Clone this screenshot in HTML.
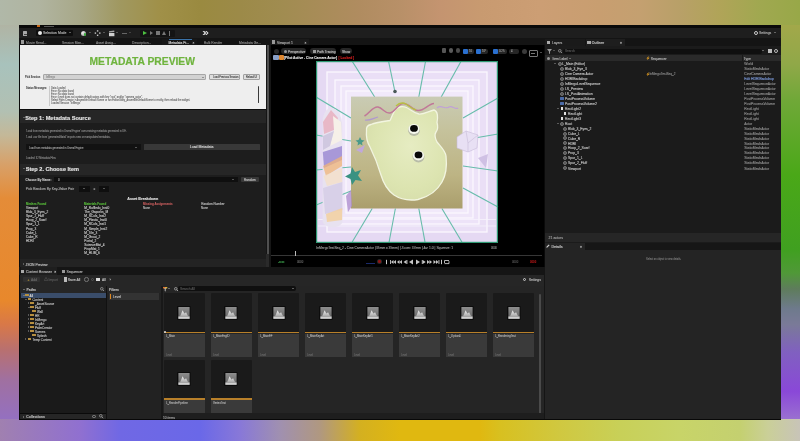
<!DOCTYPE html>
<html><head><meta charset="utf-8">
<style>
*{margin:0;padding:0;box-sizing:border-box}
html,body{width:800px;height:441px;overflow:hidden;background:#0a0a0a}
body{position:relative;font-family:"Liberation Sans",sans-serif;color:#c0c0c0}
.a{position:absolute}
.t{position:absolute;white-space:nowrap;line-height:1}
</style></head><body>
<div style="position:absolute;left:0;top:0;width:800px;height:441px;will-change:transform">
<div class="a" style="left:0;top:0;width:800px;height:26px;background:linear-gradient(90deg,#b0b8a8 0%,#b0b4a0 5%,#a8a888 10%,#a09860 15%,#a09048 20%,#9a8a40 25%,#9c8a48 30%,#a08c50 35%,#a88c58 40%,#b08c60 45%,#b89068 50%,#c49470 55%,#c89a70 60%,#cc9e74 67.5%,#c89e70 75%,#c4a070 80%,#b8a068 85%,#b0a458 90%,#a0a850 95%,#98a848 100%)"></div>
<div class="a" style="left:0;top:418px;width:800px;height:23px;background:linear-gradient(90deg,#a080b0 0%,#9070d0 10%,#7068e4 15%,#6a68e8 25%,#8878d8 30%,#a090b0 35%,#b09880 40%,#d4b020 45%,#e0b810 50%,#e0b810 60%,#d8c020 62.5%,#d0c840 70%,#c8d058 77.5%,#c8d468 85%,#c4d070 92.5%,#cacf98 96%,#c8c4b8 100%)"></div>
<div class="a" style="left:0;top:25px;width:20px;height:394px;background:linear-gradient(180deg,#b0b4a4 0%,#a8c2bc 10%,#b2c0b2 22%,#c4b898 28%,#d8a068 35.5%,#e48c38 44%,#e8882c 70%,#d87848 76%,#b87070 82.5%,#a070a0 90%,#9470c0 100%)"></div>
<div class="a" style="left:780px;top:25px;width:20px;height:394px;background:linear-gradient(180deg,#a2a84a 0%,#90a848 10%,#70a838 19%,#4aa818 38%,#40a020 57%,#509838 63%,#5e7c5c 67%,#6e7a8c 72%,#7a7a98 76%,#8060c0 83%,#8a48d8 93%,#9a70d0 100%)"></div>
<div class="a" style="left:19px;top:25px;width:762px;height:394px;background:#0a0a0a;"></div>
<div class="a" style="left:19px;top:28px;width:762px;height:10px;background:#1e1e1e;"></div>
<div class="a" style="left:19px;top:38px;width:762px;height:6.5px;background:#141414;"></div>
<div class="a" style="left:19px;top:44.5px;width:762px;height:0.5px;background:#0a0a0a;"></div>
<div class="a" style="left:23px;top:30.8px;width:4.2px;height:5.4px;background:#a8a8a8;border-radius:0.5px"></div>
<div class="a" style="left:23.6px;top:33.6px;width:3px;height:0.6px;background:#444;"></div>
<div class="a" style="left:35.5px;top:30px;width:37px;height:6px;background:#0e0e0e;border-radius:1px"></div>
<div class="a" style="left:38px;top:31px;width:4px;height:4px;border-radius:50%;background:#e8e8e8"></div>
<div class="t" style="left:43.00px;top:32.34px;font-size:3.4px;color:#b8b8b8;-webkit-text-stroke-width:0.119px;">Selection Mode</div>
<div class="a" style="left:68.50px;top:32.33px;width:0;height:0;border-left:1.12px solid transparent;border-right:1.12px solid transparent;border-top:1.35px solid #aaa"></div>
<div class="a" style="left:81px;top:30.5px;width:5px;height:5px;border-radius:50%;background:radial-gradient(circle at 35% 35%,#eee,#888)"></div>
<div class="a" style="left:84px;top:33.3px;width:2.4px;height:2.4px;border-radius:50%;background:#3aa83a"></div>
<div class="a" style="left:88.50px;top:32.33px;width:0;height:0;border-left:1.12px solid transparent;border-right:1.12px solid transparent;border-top:1.35px solid #888"></div>
<svg class="a" style="left:94px;top:29px" width="8" height="8" viewBox="94 29 8 8"><g fill="#c8c8c8"><rect x="96.9" y="30.2" width="1.4" height="1.4"/><rect x="94.7" y="32.4" width="1.4" height="1.4"/><rect x="99.1" y="32.4" width="1.4" height="1.4"/><rect x="96.9" y="34.6" width="1.4" height="1.4"/></g></svg>
<div class="a" style="left:102.50px;top:32.33px;width:0;height:0;border-left:1.12px solid transparent;border-right:1.12px solid transparent;border-top:1.35px solid #888"></div>
<svg class="a" style="left:108px;top:30px" width="8" height="7" viewBox="108 30 8 7"><rect x="109" y="33" width="5.4" height="3.2" fill="#d0d0d0"/><path d="M109 32.6 L109 31.2 L114.2 30.6 L114.4 32 Z" fill="#a8a8a8"/></svg>
<div class="a" style="left:116.00px;top:32.33px;width:0;height:0;border-left:1.12px solid transparent;border-right:1.12px solid transparent;border-top:1.35px solid #888"></div>
<div class="a" style="left:122px;top:32.5px;width:5px;height:1px;background:#666;"></div>
<div class="a" style="left:128.50px;top:32.33px;width:0;height:0;border-left:1.12px solid transparent;border-right:1.12px solid transparent;border-top:1.35px solid #666"></div>
<div class="a" style="left:140px;top:29.5px;width:35px;height:7px;background:#141414;border-radius:1px"></div>
<div class="a" style="left:143px;top:30.5px;width:0;height:0;border-left:4px solid #4cc040;border-top:2.5px solid transparent;border-bottom:2.5px solid transparent"></div>
<div class="a" style="left:149.5px;top:30.5px;width:0;height:0;border-left:3.5px solid #777;border-top:2.5px solid transparent;border-bottom:2.5px solid transparent"></div>
<div class="a" style="left:156px;top:31px;width:4px;height:4px;background:#777;"></div>
<div class="a" style="left:162px;top:30.5px;width:0;height:0;border-bottom:4.5px solid #777;border-left:2.5px solid transparent;border-right:2.5px solid transparent"></div>
<div class="a" style="left:169px;top:30.5px;width:1px;height:5px;background:#777;"></div>
<svg class="a" style="left:202px;top:30px" width="8" height="6" viewBox="202 30 8 6"><path d="M202.5 31 L204.3 31 L206.3 33 L204.3 35 L202.5 35 L204.5 33 Z M205.2 31 L206.6 31 L208.6 33 L206.6 35 L205.2 35 L207.2 33 Z" fill="#e0e0e0"/></svg>
<div class="a" style="left:37px;top:25px;width:3px;height:2px;background:#c86818;"></div>
<div class="a" style="left:44px;top:25.5px;width:10px;height:1px;background:#555;"></div>
<div class="a" style="left:754px;top:31px;width:4px;height:4px;border-radius:50%;border:1.2px solid #ccc"></div>
<div class="t" style="left:759.00px;top:32.34px;font-size:3.4px;color:#b0b0b0;-webkit-text-stroke-width:0.119px;">Settings</div>
<div class="a" style="left:773.50px;top:32.34px;width:0;height:0;border-left:1.10px solid transparent;border-right:1.10px solid transparent;border-top:1.32px solid #aaa"></div>
<div class="a" style="left:20.5px;top:40px;width:3.5px;height:4px;background:#999;"></div>
<div class="t" style="left:26.00px;top:41.64px;font-size:3.3px;color:#8a8a8a;-webkit-text-stroke-width:0.116px;">Movie Rend...</div>
<div class="t" style="left:62.00px;top:41.64px;font-size:3.3px;color:#8a8a8a;-webkit-text-stroke-width:0.116px;">Session Man...</div>
<div class="t" style="left:96.00px;top:41.64px;font-size:3.3px;color:#8a8a8a;-webkit-text-stroke-width:0.116px;">Asset Assig...</div>
<div class="t" style="left:132.00px;top:41.64px;font-size:3.3px;color:#8a8a8a;-webkit-text-stroke-width:0.116px;">Description...</div>
<div class="t" style="left:204.00px;top:41.64px;font-size:3.3px;color:#8a8a8a;-webkit-text-stroke-width:0.116px;">Bulk Render</div>
<div class="t" style="left:239.00px;top:41.64px;font-size:3.3px;color:#8a8a8a;-webkit-text-stroke-width:0.116px;">Metadata Ge...</div>
<div class="a" style="left:162px;top:38.5px;width:34.5px;height:6.5px;background:#171717;"></div>
<div class="a" style="left:168.5px;top:38.5px;width:23px;height:0.8px;background:#3a72a8;"></div>
<div class="t" style="left:168.50px;top:41.54px;font-size:3.3px;color:#d8d8d8;-webkit-text-stroke-width:0.116px;">Metadata Pr...</div>
<div class="t" style="left:192.50px;top:41.64px;font-size:3.3px;color:#bbb;-webkit-text-stroke-width:0.116px;">×</div>
<div class="a" style="left:20px;top:45px;width:246px;height:64px;background:#eeeeee;"></div>
<div class="t" style="left:89.50px;top:56.73px;font-size:10.3px;color:#6fb43e;-webkit-text-stroke-width:0.206px;font-weight:bold;">METADATA PREVIEW</div>
<div class="t" style="left:25.30px;top:76.35px;font-size:2.95px;color:#3a3a3a;-webkit-text-stroke-width:0.059px;font-weight:bold;transform:scaleX(0.847);transform-origin:0 0;">Pick Session</div>
<div class="a" style="left:43.2px;top:74.3px;width:163px;height:5.6px;background:#d2d2d2;border:0.6px solid #a6a6a6;border-radius:1px"></div>
<div class="t" style="left:46.00px;top:76.44px;font-size:2.95px;color:#8a8a8a;-webkit-text-stroke-width:0.103px;transform:scaleX(0.847);transform-origin:0 0;">InMergo</div>
<div class="a" style="left:202.00px;top:76.52px;width:0;height:0;border-left:0.97px solid transparent;border-right:0.97px solid transparent;border-top:1.17px solid #555"></div>
<div class="a" style="left:208.8px;top:74.3px;width:31.7px;height:5.6px;background:#dedede;border:0.6px solid #a0a0a0;border-radius:1px"></div>
<div class="t" style="left:212.50px;top:76.44px;font-size:2.95px;color:#404040;-webkit-text-stroke-width:0.103px;transform:scaleX(0.847);transform-origin:0 0;">Load Previous Session</div>
<div class="a" style="left:243px;top:74.3px;width:16.5px;height:5.6px;background:#dedede;border:0.6px solid #a0a0a0;border-radius:1px"></div>
<div class="t" style="left:246.00px;top:76.44px;font-size:2.95px;color:#404040;-webkit-text-stroke-width:0.103px;transform:scaleX(0.847);transform-origin:0 0;">Reload UI</div>
<div class="t" style="left:25.50px;top:86.75px;font-size:2.95px;color:#3a3a3a;-webkit-text-stroke-width:0.059px;font-weight:bold;transform:scaleX(0.847);transform-origin:0 0;">Status Messages:</div>
<div class="a" style="left:49.2px;top:85.7px;width:0.7px;height:20.3px;background:#cacaca;"></div>
<div class="t" style="left:51.30px;top:86.64px;font-size:2.95px;color:#6a6a6a;-webkit-text-stroke-width:0.103px;transform:scaleX(0.864);transform-origin:0 0;">Data Loaded</div>
<div class="t" style="left:51.30px;top:89.71px;font-size:2.95px;color:#6a6a6a;-webkit-text-stroke-width:0.103px;transform:scaleX(0.864);transform-origin:0 0;">Error: No data found</div>
<div class="t" style="left:51.30px;top:92.78px;font-size:2.95px;color:#6a6a6a;-webkit-text-stroke-width:0.103px;transform:scaleX(0.864);transform-origin:0 0;">Error: No data found</div>
<div class="t" style="left:51.30px;top:95.85px;font-size:2.95px;color:#6a6a6a;-webkit-text-stroke-width:0.103px;transform:scaleX(0.864);transform-origin:0 0;">Error: Level does not contain default actors with key &quot;root&quot; and/or &quot;camera_actor&quot;.</div>
<div class="t" style="left:51.30px;top:98.92px;font-size:2.95px;color:#6a6a6a;-webkit-text-stroke-width:0.103px;transform:scaleX(0.864);transform-origin:0 0;">Select Palm Creator &gt; Assemble Default Scene or run EditorUtility_AssembleDefaultScene to rectify, then reload the widget.</div>
<div class="t" style="left:51.30px;top:101.99px;font-size:2.95px;color:#6a6a6a;-webkit-text-stroke-width:0.103px;transform:scaleX(0.864);transform-origin:0 0;">Loaded Session &quot;InMergo&quot;</div>
<div class="a" style="left:257.5px;top:86px;width:1.2px;height:17px;background:#3a3a3a;border-radius:1px"></div>
<div class="a" style="left:20px;top:109px;width:246px;height:1px;background:#0c0c0c;"></div>
<div class="a" style="left:20px;top:110px;width:246px;height:13px;background:#262626;"></div>
<div class="a" style="left:22.50px;top:116.83px;width:0;height:0;border-left:1.12px solid transparent;border-right:1.12px solid transparent;border-top:1.35px solid #999"></div>
<div class="t" style="left:25.30px;top:116.21px;font-size:5.65px;color:#e8e8e8;-webkit-text-stroke-width:0.113px;font-weight:bold;">Step 1: Metadata Source</div>
<div class="a" style="left:20px;top:123px;width:246px;height:41px;background:#1d1d1d;"></div>
<div class="t" style="left:26.20px;top:129.74px;font-size:2.95px;color:#8a8a8a;-webkit-text-stroke-width:0.103px;transform:scaleX(0.854);transform-origin:0 0;">&#x27;Load from metadata generated in Unreal Engine&#x27; uses existing metadata generated in UE.</div>
<div class="t" style="left:26.20px;top:136.04px;font-size:2.95px;color:#8a8a8a;-webkit-text-stroke-width:0.103px;transform:scaleX(0.864);transform-origin:0 0;">&#x27;Load .csv file from &#x27;generated/data/&#x27; imports new or manipulated metadata.</div>
<div class="a" style="left:25.7px;top:144.2px;width:115px;height:6px;background:#121212;border-radius:0.5px"></div>
<div class="t" style="left:28.50px;top:146.54px;font-size:2.95px;color:#a0a0a0;-webkit-text-stroke-width:0.103px;transform:scaleX(0.864);transform-origin:0 0;">Load from metadata generated in Unreal Engine</div>
<div class="a" style="left:135.00px;top:146.52px;width:0;height:0;border-left:1.12px solid transparent;border-right:1.12px solid transparent;border-top:1.35px solid #999"></div>
<div class="a" style="left:143.9px;top:144.2px;width:115.7px;height:5.7px;background:#383838;border-radius:0.5px"></div>
<div class="t" style="left:189.70px;top:146.43px;font-size:3.55px;color:#d8d8d8;-webkit-text-stroke-width:0.124px;">Load Metadata</div>
<div class="t" style="left:25.70px;top:157.04px;font-size:2.95px;color:#8a8a8a;-webkit-text-stroke-width:0.103px;transform:scaleX(0.858);transform-origin:0 0;">Loaded: 32 Metadata Files</div>
<div class="a" style="left:20px;top:164px;width:246px;height:11px;background:#262626;"></div>
<div class="a" style="left:22.50px;top:168.32px;width:0;height:0;border-left:1.12px solid transparent;border-right:1.12px solid transparent;border-top:1.35px solid #999"></div>
<div class="t" style="left:25.70px;top:167.31px;font-size:5.58px;color:#e8e8e8;-webkit-text-stroke-width:0.112px;font-weight:bold;">Step 2. Choose Item</div>
<div class="a" style="left:20px;top:175px;width:246px;height:84px;background:#1d1d1d;"></div>
<div class="t" style="left:25.50px;top:178.54px;font-size:3.05px;color:#d8d8d8;-webkit-text-stroke-width:0.061px;font-weight:bold;">Choose By Name:</div>
<div class="a" style="left:54.2px;top:176.5px;width:183.8px;height:5.5px;background:#0f0f0f;border-radius:0.5px"></div>
<div class="t" style="left:58.00px;top:178.54px;font-size:2.95px;color:#aaa;-webkit-text-stroke-width:0.103px;transform:scaleX(0.949);transform-origin:0 0;">0</div>
<div class="a" style="left:232.00px;top:178.52px;width:0;height:0;border-left:1.12px solid transparent;border-right:1.12px solid transparent;border-top:1.35px solid #999"></div>
<div class="a" style="left:240.8px;top:176.5px;width:18.5px;height:5.5px;background:#383838;border-radius:1px"></div>
<div class="t" style="left:244.00px;top:178.53px;font-size:3.1px;color:#c8c8c8;-webkit-text-stroke-width:0.109px;">Random</div>
<div class="t" style="left:25.70px;top:188.34px;font-size:3.4px;color:#a8a8a8;-webkit-text-stroke-width:0.119px;">Pick Random By Key-Value Pair</div>
<div class="a" style="left:79px;top:186px;width:10.5px;height:6px;background:#0f0f0f;border-radius:0.5px"></div>
<div class="a" style="left:83.00px;top:188.32px;width:0;height:0;border-left:1.12px solid transparent;border-right:1.12px solid transparent;border-top:1.35px solid #999"></div>
<div class="t" style="left:93.50px;top:188.34px;font-size:3px;color:#999;-webkit-text-stroke-width:0.105px;">=</div>
<div class="a" style="left:99.2px;top:186px;width:10px;height:6px;background:#0f0f0f;border-radius:0.5px"></div>
<div class="a" style="left:103.00px;top:188.32px;width:0;height:0;border-left:1.12px solid transparent;border-right:1.12px solid transparent;border-top:1.35px solid #999"></div>
<div class="t" style="left:127.25px;top:197.56px;font-size:3.69px;color:#e8e8e8;-webkit-text-stroke-width:0.074px;font-weight:bold;">Asset Breakdown</div>
<div class="t" style="left:25.90px;top:202.95px;font-size:2.95px;color:#5cc83c;-webkit-text-stroke-width:0.059px;font-weight:bold;transform:scaleX(0.983);transform-origin:0 0;">Meshes Found</div>
<div class="t" style="left:84.30px;top:202.95px;font-size:2.95px;color:#5cc83c;-webkit-text-stroke-width:0.059px;font-weight:bold;transform:scaleX(0.983);transform-origin:0 0;">Materials Found</div>
<div class="t" style="left:142.70px;top:202.95px;font-size:2.95px;color:#d06060;-webkit-text-stroke-width:0.059px;font-weight:bold;transform:scaleX(0.983);transform-origin:0 0;">Missing Assignments</div>
<div class="t" style="left:201.25px;top:202.93px;font-size:3.05px;color:#c0c0c0;-webkit-text-stroke-width:0.107px;">Random Number</div>
<div class="t" style="left:142.70px;top:207.04px;font-size:2.95px;color:#c0c0c0;-webkit-text-stroke-width:0.103px;transform:scaleX(0.983);transform-origin:0 0;">None</div>
<div class="t" style="left:201.25px;top:207.04px;font-size:2.95px;color:#c0c0c0;-webkit-text-stroke-width:0.103px;transform:scaleX(0.983);transform-origin:0 0;">None</div>
<div class="t" style="left:25.90px;top:207.08px;font-size:3.2px;color:#c8c8c8;-webkit-text-stroke-width:0.112px;">Viewport</div>
<div class="t" style="left:25.90px;top:211.18px;font-size:3.2px;color:#c8c8c8;-webkit-text-stroke-width:0.112px;">Blob_3_Eyes_2</div>
<div class="t" style="left:25.90px;top:215.28px;font-size:3.2px;color:#c8c8c8;-webkit-text-stroke-width:0.112px;">Spur_2_Fluff</div>
<div class="t" style="left:25.90px;top:219.38px;font-size:3.2px;color:#c8c8c8;-webkit-text-stroke-width:0.112px;">Hoop_2_Scarf</div>
<div class="t" style="left:25.90px;top:223.48px;font-size:3.2px;color:#c8c8c8;-webkit-text-stroke-width:0.112px;">Spur_1_L</div>
<div class="t" style="left:25.90px;top:227.58px;font-size:3.2px;color:#c8c8c8;-webkit-text-stroke-width:0.112px;">Prop_3</div>
<div class="t" style="left:25.90px;top:231.68px;font-size:3.2px;color:#c8c8c8;-webkit-text-stroke-width:0.112px;">Cube_L</div>
<div class="t" style="left:25.90px;top:235.78px;font-size:3.2px;color:#c8c8c8;-webkit-text-stroke-width:0.112px;">Cube_R</div>
<div class="t" style="left:25.90px;top:239.88px;font-size:3.2px;color:#c8c8c8;-webkit-text-stroke-width:0.112px;">HDRI</div>
<div class="t" style="left:84.30px;top:207.08px;font-size:3.2px;color:#c8c8c8;-webkit-text-stroke-width:0.112px;">M_Ruffledo_Inst0</div>
<div class="t" style="left:84.30px;top:211.18px;font-size:3.2px;color:#c8c8c8;-webkit-text-stroke-width:0.112px;">The_Gaporks_M</div>
<div class="t" style="left:84.30px;top:215.28px;font-size:3.2px;color:#c8c8c8;-webkit-text-stroke-width:0.112px;">M_SCols_Inst2</div>
<div class="t" style="left:84.30px;top:219.38px;font-size:3.2px;color:#c8c8c8;-webkit-text-stroke-width:0.112px;">M_Plastic_Inst0</div>
<div class="t" style="left:84.30px;top:223.48px;font-size:3.2px;color:#c8c8c8;-webkit-text-stroke-width:0.112px;">M_RCols_Inst1</div>
<div class="t" style="left:84.30px;top:227.58px;font-size:3.2px;color:#c8c8c8;-webkit-text-stroke-width:0.112px;">M_Simple_Inst2</div>
<div class="t" style="left:84.30px;top:231.68px;font-size:3.2px;color:#c8c8c8;-webkit-text-stroke-width:0.112px;">M_Tile_3</div>
<div class="t" style="left:84.30px;top:235.78px;font-size:3.2px;color:#c8c8c8;-webkit-text-stroke-width:0.112px;">M_Grout_2</div>
<div class="t" style="left:84.30px;top:239.88px;font-size:3.2px;color:#c8c8c8;-webkit-text-stroke-width:0.112px;">Portal_2</div>
<div class="t" style="left:84.30px;top:243.98px;font-size:3.2px;color:#c8c8c8;-webkit-text-stroke-width:0.112px;">ScienceMat_4</div>
<div class="t" style="left:84.30px;top:248.08px;font-size:3.2px;color:#c8c8c8;-webkit-text-stroke-width:0.112px;">PropMat_1</div>
<div class="t" style="left:84.30px;top:252.18px;font-size:3.2px;color:#c8c8c8;-webkit-text-stroke-width:0.112px;">M_HLIM_6</div>
<div class="a" style="left:20px;top:259px;width:246px;height:7.5px;background:#232323;"></div>
<div class="a" style="left:22.50px;top:263.22px;width:0;height:0;border-top:0.97px solid transparent;border-bottom:0.97px solid transparent;border-left:1.17px solid #999"></div>
<div class="t" style="left:25.50px;top:263.54px;font-size:3.38px;color:#c0c0c0;-webkit-text-stroke-width:0.118px;">JSON Preview</div>
<div class="a" style="left:266px;top:45px;width:1px;height:209px;background:#151515;"></div>
<div class="a" style="left:267px;top:45px;width:2.2px;height:209px;background:#505050;"></div>
<div class="a" style="left:266px;top:254px;width:3px;height:13px;background:#2a2a2a;"></div>
<div class="a" style="left:269px;top:45px;width:2px;height:222px;background:#161616;"></div>
<div class="a" style="left:271px;top:45px;width:273px;height:222px;background:#000;"></div>
<div class="a" style="left:270px;top:39px;width:39px;height:6px;background:#1a1a1a;"></div>
<div class="a" style="left:271.5px;top:40.3px;width:3.5px;height:3.5px;background:#999;"></div>
<div class="t" style="left:277.00px;top:41.64px;font-size:3.4px;color:#b0b0b0;-webkit-text-stroke-width:0.119px;">Viewport 1</div>
<div class="t" style="left:304.50px;top:41.64px;font-size:3.3px;color:#bbb;-webkit-text-stroke-width:0.116px;">×</div>
<div class="a" style="left:274px;top:49px;width:5px;height:5px;border-radius:50%;background:#2a2a2a"></div>
<div class="a" style="left:281px;top:48.2px;width:25px;height:6px;background:#262626;border-radius:3px"></div>
<div class="t" style="left:288.00px;top:50.54px;font-size:3.3px;color:#c0c0c0;-webkit-text-stroke-width:0.116px;">Perspective</div>
<div class="a" style="left:310px;top:48.2px;width:26px;height:6px;background:#262626;border-radius:3px"></div>
<div class="t" style="left:317.00px;top:50.54px;font-size:3.3px;color:#c0c0c0;-webkit-text-stroke-width:0.116px;">Path Tracing</div>
<div class="a" style="left:340px;top:48.2px;width:11.5px;height:6px;background:#262626;border-radius:3px"></div>
<div class="t" style="left:342.00px;top:50.54px;font-size:3.3px;color:#c0c0c0;-webkit-text-stroke-width:0.116px;">Show</div>
<div class="a" style="left:283.5px;top:49.6px;width:3px;height:3px;background:#999;border-radius:50%"></div>
<div class="a" style="left:312.5px;top:49.6px;width:3px;height:3px;background:#999;"></div>
<div class="a" style="left:273px;top:55px;width:6px;height:5px;background:#8aa0c8;border-radius:1px"></div>
<div class="a" style="left:279px;top:55px;width:4.5px;height:5px;background:#e08830;border-radius:1px"></div>
<div class="t" style="left:284.00px;top:56.54px;font-size:3.33px;color:#f0f0f0;-webkit-text-stroke-width:0.067px;font-weight:bold;">[Pilot Active - Cine Camera Actor]</div>
<div class="t" style="left:338.50px;top:56.54px;font-size:3.33px;color:#e02020;-webkit-text-stroke-width:0.067px;font-weight:bold;">[ Locked ]</div>
<div class="a" style="left:462.5px;top:48.5px;width:5px;height:5px;background:#2a70d0;border-radius:1px"></div>
<div class="a" style="left:476px;top:48.5px;width:5px;height:5px;background:#2a70d0;border-radius:1px"></div>
<div class="a" style="left:493px;top:48.5px;width:5px;height:5px;background:#2a70d0;border-radius:1px"></div>
<div class="a" style="left:467.5px;top:48.5px;width:6px;height:5px;background:#262626;border-radius:0 2px 2px 0"></div>
<div class="a" style="left:481px;top:48.5px;width:7px;height:5px;background:#262626;border-radius:0 2px 2px 0"></div>
<div class="a" style="left:498px;top:48.5px;width:9px;height:5px;background:#262626;border-radius:0 2px 2px 0"></div>
<div class="a" style="left:508.5px;top:48.5px;width:10px;height:5px;background:#262626;border-radius:2px"></div>
<div class="a" style="left:522px;top:48.5px;width:5px;height:5px;background:#3a3a3a;border-radius:50%"></div>
<div class="a" style="left:528.6px;top:50px;width:9.2px;height:6.8px;background:#000;border:0.9px solid #777;border-radius:1px"></div>
<div class="a" style="left:531px;top:53px;width:4px;height:0.8px;background:#777;"></div>
<div class="a" style="left:539.50px;top:52.33px;width:0;height:0;border-left:1.12px solid transparent;border-right:1.12px solid transparent;border-top:1.35px solid #999"></div>
<div class="t" style="left:468.50px;top:50.34px;font-size:2.95px;color:#999;-webkit-text-stroke-width:0.103px;transform:scaleX(0.949);transform-origin:0 0;">10</div>
<div class="t" style="left:482.00px;top:50.34px;font-size:2.95px;color:#999;-webkit-text-stroke-width:0.103px;transform:scaleX(0.949);transform-origin:0 0;">10°</div>
<div class="t" style="left:499.00px;top:50.34px;font-size:2.95px;color:#999;-webkit-text-stroke-width:0.103px;transform:scaleX(0.949);transform-origin:0 0;">0.25</div>
<div class="t" style="left:511.00px;top:50.34px;font-size:2.95px;color:#999;-webkit-text-stroke-width:0.103px;transform:scaleX(0.949);transform-origin:0 0;">4</div>
<div class="a" style="left:441.5px;top:48.3px;width:4.5px;height:4.5px;background:#555;border-radius:1px"></div>
<div class="a" style="left:448.5px;top:48.3px;width:4.5px;height:4.5px;background:#5a5a5a;border-radius:50%"></div>
<div class="a" style="left:455.5px;top:48.3px;width:4.5px;height:4.5px;background:#4a4a4a;border-radius:50%"></div>
<svg class="a" style="left:316px;top:61px" width="183" height="183" viewBox="316 61 183 183">
<defs>
<linearGradient id="kh" x1="0" y1="0" x2="0" y2="1"><stop offset="0" stop-color="#c9cbb4"/><stop offset="0.3" stop-color="#c5c29c"/><stop offset="0.7" stop-color="#bdb484"/><stop offset="1" stop-color="#aa9e6c"/></linearGradient>
<radialGradient id="bl" cx="0.55" cy="0.42" r="0.65"><stop offset="0" stop-color="#e6ecc2"/><stop offset="0.7" stop-color="#dce4b0"/><stop offset="0.92" stop-color="#d8dfac"/><stop offset="1" stop-color="#eef2d6"/></radialGradient>
<radialGradient id="eye" cx="0.5" cy="0.6" r="0.5"><stop offset="0" stop-color="#c8ccc0"/><stop offset="0.7" stop-color="#e8ecd8"/><stop offset="1" stop-color="#f4f6ea"/></radialGradient>
</defs>
<rect x="316" y="61" width="182" height="182" fill="#e5d9f3"/>
<rect x="327" y="72" width="160" height="160" fill="#eadff6"/>
<rect x="335" y="80" width="144" height="144" fill="#ede3f8"/>
<rect x="341" y="86" width="132" height="132" fill="#efe6f9"/>
<rect x="346" y="91" width="122" height="122" fill="#f1e9fa"/>
<g fill="none" stroke="#faf7fe" stroke-width="1.3">
<rect x="327" y="72" width="160" height="160"/>
<rect x="335" y="80" width="144" height="144"/>
<rect x="341" y="86" width="132" height="132"/>
<rect x="346" y="91" width="122" height="122"/>
</g>
<g stroke="#f6f2fd" stroke-width="0.8" fill="none">
<line x1="318" y1="219.5" x2="496" y2="219.5"/>
<line x1="318" y1="226" x2="496" y2="226"/>
</g>
<g stroke="#66bcaa" stroke-width="1.1" fill="none">
<line x1="352" y1="61" x2="374.7" y2="97"/>
<line x1="388.5" y1="61" x2="395" y2="92"/>
<line x1="425.6" y1="61" x2="418.8" y2="97"/>
<line x1="461.2" y1="61" x2="441.2" y2="97"/>
<line x1="316" y1="97" x2="351" y2="118"/>
<line x1="498" y1="98" x2="463" y2="118"/>
<line x1="316" y1="135" x2="351" y2="141"/>
<line x1="498" y1="134" x2="463" y2="140"/>
<line x1="316" y1="170" x2="351" y2="167"/>
<line x1="498" y1="171" x2="463" y2="166"/>
<line x1="316" y1="205" x2="351" y2="191"/>
<line x1="498" y1="207" x2="463" y2="188"/>
<line x1="352.2" y1="242" x2="372.2" y2="208.5"/>
<line x1="389.1" y1="242" x2="395.4" y2="208.5"/>
<line x1="425" y1="242" x2="418.8" y2="208.5"/>
<line x1="461.9" y1="242" x2="441.9" y2="208.5"/>
</g>
<rect x="351" y="96.6" width="111.5" height="111.9" fill="url(#kh)"/>
<path d="M366.5 131 C366 127 368 125 371 124.5 C375 122.5 382 121.5 390 120.5 C392 117 393 112 396 109 C398 106.5 403 106 406.5 107.5 C410 109 413 113 419 114 C424 114.5 429 111 434 110 C438 111 438 118 437 122.5 C438 126 438.5 129 436 132 C434.5 134 435 138 437 142 C440 146 445 150 446 156 C447 165 446 175 442 182 C437 191 428 197 418 199.5 C408 201 400 199 394 195 C386 189 383 182 381 175 C378 165 374 155 370 147 C367 142 366 136 366.5 131 Z" fill="url(#bl)" stroke="#f2f5e0" stroke-width="1.3"/>
<ellipse cx="414" cy="130.2" rx="6" ry="5.8" fill="#b8bca8"/><ellipse cx="414" cy="129" rx="5.6" ry="5" fill="#f6f8ee"/><ellipse cx="414" cy="128.4" rx="3.9" ry="3.4" fill="#080808"/>
<ellipse cx="418.5" cy="156.7" rx="6" ry="5.8" fill="#b8bca8"/><ellipse cx="418.5" cy="155.5" rx="5.6" ry="5" fill="#f6f8ee"/><ellipse cx="418.5" cy="154.9" rx="3.9" ry="3.4" fill="#080808"/>
<path d="M364.5 116 C370 113 373 106 378 107 C383 108 385 114 390 113 C395 112 398 104 403 103.5 C409 103 412 110 418 110.5 C424 111 428 104 434 103.5" fill="none" stroke="#c07898" stroke-width="1.5"/>
<path d="M396 106 C399 103 403 102.5 406 104 C409 106 412 109 416 110" fill="none" stroke="#b8c040" stroke-width="1.3"/>
<path d="M365 120 C369 121 374 118 378 117" fill="none" stroke="#b098d0" stroke-width="1.2"/>
<path d="M437 108 C441 104 445 110 449 107 C452 105 455 110 458 108" fill="none" stroke="#c0a0d8" stroke-width="1.2"/>
<path d="M322.6 124 C322 114 327 107 332 108 C338 109 342 116 342.3 126 L342.5 222 C340 229 326 229 322.6 222 Z" fill="#e8e2f0"/>
<path d="M323 122 L331 110 L338 118 L334 130 L324 134 Z" fill="#e8b0c0" opacity="0.85"/>
<path d="M333 116 L341 122 L342 140 L330 146 L334 130 Z" fill="#f6f0e8"/>
<path d="M323 136 L334 131 L330 146 L323 150 Z" fill="#d0c8e0"/>
<path d="M322.8 152 L342 146 L342 160 L324 168 Z" fill="#a898d8"/>
<path d="M323 166 L342 156 L342 166 L326 176 Z" fill="#f0b478" opacity="0.75"/>
<path d="M323.5 176 L342 168 L342.3 182 L327 186 Z" fill="#f4e0c8" opacity="0.8"/>
<path d="M323 188 L342.3 182 L342.3 210 L325 214 Z" fill="#d8d0e8"/>
<path d="M326 214 L342.3 208 L342 220 L327 222 Z" fill="#f2d0a0" opacity="0.85"/>
<path d="M346 196 L351 190 L352 206 L348 212 Z" fill="#b090d0" opacity="0.8"/>
<path d="M352 167 L355 172 L361 170 L358 175.5 L362 181 L355.5 180 L352 185 L350.5 179 L345 176.5 L350.5 173.5 Z" fill="#3a9282"/>
<path d="M360 137 L361.5 140 L364.5 140.5 L362 142.5 L362.5 145.5 L360 144 L357.5 145.5 L358 142.5 L355.5 140.5 L358.5 140 Z" fill="#4a9a8a"/>
<path d="M457 137 L466 131 L478 135 L477 148 L468 152 L457 148 Z" fill="#e8e0f4" stroke="#c8bcd8" stroke-width="0.6"/>
<path d="M466 131 L468 143 L478 135 M468 143 L468 152" fill="none" stroke="#c8bcd8" stroke-width="0.6"/>
<path d="M478 158 L488 154 L486 168 L482 163 Z" fill="#cfc0e4"/>
<path d="M356 150 L365 145 L362 153 Z" fill="#c0a8dc"/>
<circle cx="395" cy="91.5" r="1.8" fill="#4a5858"/>
<rect x="316.6" y="61.6" width="180.8" height="180.8" fill="none" stroke="#2f9a74" stroke-width="1.2"/>
</svg>

<div class="t" style="left:316.25px;top:247.44px;font-size:3.3px;color:#9a9a9a;-webkit-text-stroke-width:0.116px;">InMergoTestSeq_2 - Cine CameraActor (35mm x 35mm) | Zoom: 37mm | Av: 1.0 | Squeeze: 1</div>
<div class="t" style="left:491.40px;top:247.34px;font-size:2.95px;color:#888;-webkit-text-stroke-width:0.103px;transform:scaleX(0.881);transform-origin:0 0;">0000</div>
<div class="a" style="left:271px;top:254.8px;width:271px;height:1.4px;background:#363636;"></div>
<div class="a" style="left:294.5px;top:251px;width:1.6px;height:4.5px;background:#bbb;"></div>
<div class="t" style="left:278.00px;top:260.64px;font-size:2.95px;color:#3a9a4a;-webkit-text-stroke-width:0.103px;transform:scaleX(0.949);transform-origin:0 0;">-xxxx</div>
<div class="t" style="left:297.00px;top:260.64px;font-size:2.95px;color:#666;-webkit-text-stroke-width:0.103px;transform:scaleX(0.949);transform-origin:0 0;">0000</div>
<div class="a" style="left:366px;top:262.8px;width:9px;height:0.7px;background:#1a2a6a;"></div>
<div class="a" style="left:376.8px;top:259px;width:5.2px;height:5.2px;border-radius:50%;background:#2a2a2a"></div>
<div class="a" style="left:378.1px;top:260.3px;width:2.6px;height:2.6px;border-radius:50%;background:#901414"></div>
<svg class="a" style="left:384px;top:258px" width="68" height="8" viewBox="384 258 68 8"><g fill="#c8c8c8"><rect x="386" y="259.8" width="1" height="4.4"/><rect x="390" y="260" width="0.9" height="4"/><path d="M391 262 L393.5 260 L393.5 264 Z M393.5 262 L396 260 L396 264 Z"/><path d="M397 262 L399.5 260 L399.5 264 Z M399.5 262 L402 260 L402 264 Z"/><path d="M403.5 262 L406.5 260 L406.5 264 Z"/><rect x="406.5" y="260" width="0.9" height="4"/><path d="M409 262 L413 259.6 L413 264.4 Z"/><path d="M416 259.6 L420 262 L416 264.4 Z"/><rect x="421.8" y="260" width="0.9" height="4"/><path d="M422.7 260 L425.7 262 L422.7 264 Z"/><path d="M427 260 L429.5 262 L427 264 Z M429.5 260 L432 262 L429.5 264 Z"/><path d="M433.5 260 L436 262 L433.5 264 Z M436 260 L438.5 262 L436 264 Z"/><rect x="438.5" y="260" width="0.9" height="4"/><rect x="441" y="259.8" width="1" height="4.4"/></g><path d="M444.5 263 L444.5 260.5 L449 260.5 M449 261.2 L449 263.6 L444.5 263.6" fill="none" stroke="#c8c8c8" stroke-width="0.9"/></svg>
<div class="t" style="left:512.00px;top:260.94px;font-size:2.95px;color:#555;-webkit-text-stroke-width:0.103px;transform:scaleX(0.949);transform-origin:0 0;">0000</div>
<div class="t" style="left:529.50px;top:260.95px;font-size:2.95px;color:#b01818;-webkit-text-stroke-width:0.059px;font-weight:bold;transform:scaleX(0.949);transform-origin:0 0;">0000</div>
<div class="a" style="left:545px;top:39px;width:236px;height:6.5px;background:#141414;"></div>
<div class="a" style="left:545px;top:39px;width:40px;height:6.5px;background:#1a1a1a;"></div>
<div class="a" style="left:547px;top:40.5px;width:3px;height:3.5px;background:#aaa;"></div>
<div class="t" style="left:552.00px;top:41.54px;font-size:3.43px;color:#b0b0b0;-webkit-text-stroke-width:0.120px;">Layers</div>
<div class="a" style="left:585.6px;top:39px;width:39.2px;height:6.5px;background:#1e1e1e;"></div>
<div class="a" style="left:587px;top:40.5px;width:3.5px;height:3.5px;background:#aaa;"></div>
<div class="t" style="left:591.80px;top:41.54px;font-size:3.5px;color:#c8c8c8;-webkit-text-stroke-width:0.123px;">Outliner</div>
<div class="t" style="left:620.00px;top:41.54px;font-size:3.3px;color:#ccc;-webkit-text-stroke-width:0.116px;">×</div>
<div class="a" style="left:545px;top:45.5px;width:236px;height:9.5px;background:#1b1b1b;"></div>
<svg class="a" style="left:547px;top:48.5px" width="5" height="5" viewBox="0 0 5 5"><path d="M0 0 L5 0 L3 2.5 L3 5 L2 4.5 L2 2.5 Z" fill="#999"/></svg>
<div class="a" style="left:553.00px;top:50.33px;width:0;height:0;border-left:1.12px solid transparent;border-right:1.12px solid transparent;border-top:1.35px solid #888"></div>
<svg class="a" style="left:558.30px;top:48.60px" width="4.5" height="4.5" viewBox="0 0 4.5 4.5"><circle cx="1.8" cy="1.8" r="1.3" fill="none" stroke="#aaa" stroke-width="0.7"/><path d="M2.8 2.8 L4.2 4.2" stroke="#aaa" stroke-width="0.8"/></svg>
<div class="a" style="left:563px;top:48.5px;width:199px;height:5px;background:#0f0f0f;border-radius:2px"></div>
<div class="t" style="left:565.00px;top:50.33px;font-size:3.16px;color:#555;-webkit-text-stroke-width:0.111px;">Search</div>
<div class="a" style="left:761.50px;top:50.33px;width:0;height:0;border-left:1.12px solid transparent;border-right:1.12px solid transparent;border-top:1.35px solid #aaa"></div>
<div class="a" style="left:767.5px;top:49.2px;width:4px;height:3.5px;background:#bbb;"></div>
<div class="a" style="left:773.5px;top:49px;width:4px;height:4px;border-radius:50%;border:0.9px solid #bbb"></div>
<div class="a" style="left:545px;top:55px;width:236px;height:6.3px;background:#2a2a2a;"></div>
<div class="a" style="left:547.3px;top:56.8px;width:3px;height:3px;border-radius:50%;background:#999"></div>
<div class="t" style="left:552.50px;top:57.53px;font-size:3.21px;color:#b8b8b8;-webkit-text-stroke-width:0.112px;">Item Label</div>
<div class="a" style="left:569.00px;top:57.60px;width:0;height:0;border-left:1.00px solid transparent;border-right:1.00px solid transparent;border-bottom:1.20px solid #aaa"></div>
<svg class="a" style="left:645.80px;top:56.00px" width="4" height="4.4" viewBox="0 0 4 4.4"><path d="M2.8 0 L0.4 2.5 L1.8 2.5 L1 4.4 L3.6 1.8 L2.2 1.8 Z" fill="#e8a020"/></svg>
<div class="t" style="left:650.80px;top:57.54px;font-size:3.29px;color:#b8b8b8;-webkit-text-stroke-width:0.115px;">Sequencer</div>
<div class="a" style="left:741.8px;top:55px;width:0.6px;height:6.3px;background:#1a1a1a;"></div>
<div class="t" style="left:743.75px;top:57.54px;font-size:3.23px;color:#b8b8b8;-webkit-text-stroke-width:0.113px;">Type</div>
<div class="a" style="left:545px;top:61.3px;width:236px;height:171.7px;background:#1b1b1b;"></div>
<div class="a" style="left:554.20px;top:63.40px;width:0;height:0;border-left:1.00px solid transparent;border-right:1.00px solid transparent;border-top:1.20px solid #999"></div>
<svg class="a" style="left:557.50px;top:62.00px" width="4" height="4" viewBox="0 0 4 4"><circle cx="2" cy="2" r="1.55" fill="#555" stroke="#9a9a9a" stroke-width="0.6"/></svg>
<div class="t" style="left:562.30px;top:63.34px;font-size:3.35px;color:#c4c4c4;-webkit-text-stroke-width:0.117px;">L_Main (Editor)</div>
<div class="t" style="left:744.30px;top:63.34px;font-size:3.42px;color:#8e8e8e;-webkit-text-stroke-width:0.120px;">World</div>
<svg class="a" style="left:560.00px;top:67.00px" width="4" height="4" viewBox="0 0 4 4"><circle cx="2" cy="2" r="1.55" fill="#555" stroke="#9a9a9a" stroke-width="0.6"/></svg>
<div class="t" style="left:565.00px;top:68.34px;font-size:3.35px;color:#c4c4c4;-webkit-text-stroke-width:0.117px;">Blob_3_Eye_3</div>
<div class="t" style="left:744.30px;top:68.34px;font-size:3.42px;color:#8e8e8e;-webkit-text-stroke-width:0.120px;">StaticMeshActor</div>
<svg class="a" style="left:560.00px;top:72.00px" width="4" height="4" viewBox="0 0 4 4"><circle cx="2" cy="2" r="1.55" fill="#555" stroke="#9a9a9a" stroke-width="0.6"/></svg>
<div class="t" style="left:565.00px;top:73.34px;font-size:3.35px;color:#c4c4c4;-webkit-text-stroke-width:0.117px;">Cine Camera Actor</div>
<div class="t" style="left:744.30px;top:73.34px;font-size:3.42px;color:#8e8e8e;-webkit-text-stroke-width:0.120px;">CineCameraActor</div>
<svg class="a" style="left:560.00px;top:77.00px" width="4" height="4" viewBox="0 0 4 4"><circle cx="2" cy="2" r="1.55" fill="#555" stroke="#9a9a9a" stroke-width="0.6"/></svg>
<div class="t" style="left:565.00px;top:78.34px;font-size:3.35px;color:#c4c4c4;-webkit-text-stroke-width:0.117px;">HDRIBackdrop</div>
<div class="t" style="left:744.30px;top:78.34px;font-size:3.42px;color:#7a98d8;-webkit-text-stroke-width:0.120px;">Edit HDRIBackdrop</div>
<svg class="a" style="left:560.00px;top:82.00px" width="4" height="4" viewBox="0 0 4 4"><circle cx="2" cy="2" r="1.55" fill="#555" stroke="#9a9a9a" stroke-width="0.6"/></svg>
<div class="t" style="left:565.00px;top:83.34px;font-size:3.35px;color:#c4c4c4;-webkit-text-stroke-width:0.117px;">InMergoLevelSequence</div>
<div class="t" style="left:744.30px;top:83.34px;font-size:3.42px;color:#8e8e8e;-webkit-text-stroke-width:0.120px;">LevelSequenceActor</div>
<svg class="a" style="left:560.00px;top:87.00px" width="4" height="4" viewBox="0 0 4 4"><circle cx="2" cy="2" r="1.55" fill="#555" stroke="#9a9a9a" stroke-width="0.6"/></svg>
<div class="t" style="left:565.00px;top:88.34px;font-size:3.35px;color:#c4c4c4;-webkit-text-stroke-width:0.117px;">LS_Preview</div>
<div class="t" style="left:744.30px;top:88.34px;font-size:3.42px;color:#8e8e8e;-webkit-text-stroke-width:0.120px;">LevelSequenceActor</div>
<svg class="a" style="left:560.00px;top:92.00px" width="4" height="4" viewBox="0 0 4 4"><circle cx="2" cy="2" r="1.55" fill="#555" stroke="#9a9a9a" stroke-width="0.6"/></svg>
<div class="t" style="left:565.00px;top:93.34px;font-size:3.35px;color:#c4c4c4;-webkit-text-stroke-width:0.117px;">LS_PostAnimation</div>
<div class="t" style="left:744.30px;top:93.34px;font-size:3.42px;color:#8e8e8e;-webkit-text-stroke-width:0.120px;">LevelSequenceActor</div>
<div class="a" style="left:560px;top:96.9px;width:3.6px;height:3.6px;background:#4a6aa8;border-radius:0.5px"></div>
<div class="t" style="left:565.00px;top:98.24px;font-size:3.35px;color:#c4c4c4;-webkit-text-stroke-width:0.117px;">PostProcessVolume</div>
<div class="t" style="left:744.30px;top:98.24px;font-size:3.42px;color:#8e8e8e;-webkit-text-stroke-width:0.120px;">PostProcessVolume</div>
<div class="a" style="left:560px;top:101.8px;width:3.6px;height:3.6px;background:#4a6aa8;border-radius:0.5px"></div>
<div class="t" style="left:565.00px;top:103.14px;font-size:3.35px;color:#c4c4c4;-webkit-text-stroke-width:0.117px;">PostProcessVolume2</div>
<div class="t" style="left:744.30px;top:103.14px;font-size:3.42px;color:#8e8e8e;-webkit-text-stroke-width:0.120px;">PostProcessVolume</div>
<div class="a" style="left:556.80px;top:108.10px;width:0;height:0;border-left:1.00px solid transparent;border-right:1.00px solid transparent;border-top:1.20px solid #999"></div>
<div class="a" style="left:560.5px;top:107.2px;width:2.6px;height:2.6px;background:#e0e0e0;"></div>
<div class="t" style="left:565.00px;top:108.04px;font-size:3.35px;color:#c4c4c4;-webkit-text-stroke-width:0.117px;">RectLight2</div>
<div class="t" style="left:744.30px;top:108.04px;font-size:3.42px;color:#8e8e8e;-webkit-text-stroke-width:0.120px;">RectLight</div>
<div class="a" style="left:563.8px;top:112.1px;width:2.6px;height:2.6px;background:#e0e0e0;"></div>
<div class="t" style="left:568.00px;top:112.94px;font-size:3.35px;color:#c4c4c4;-webkit-text-stroke-width:0.117px;">RectLight</div>
<div class="t" style="left:744.30px;top:112.94px;font-size:3.42px;color:#8e8e8e;-webkit-text-stroke-width:0.120px;">RectLight</div>
<div class="a" style="left:560.5px;top:117.0px;width:2.6px;height:2.6px;background:#e0e0e0;"></div>
<div class="t" style="left:565.00px;top:117.84px;font-size:3.35px;color:#c4c4c4;-webkit-text-stroke-width:0.117px;">RectLight3</div>
<div class="t" style="left:744.30px;top:117.84px;font-size:3.42px;color:#8e8e8e;-webkit-text-stroke-width:0.120px;">RectLight</div>
<div class="a" style="left:556.80px;top:122.90px;width:0;height:0;border-left:1.00px solid transparent;border-right:1.00px solid transparent;border-top:1.20px solid #999"></div>
<svg class="a" style="left:560.00px;top:121.50px" width="4" height="4" viewBox="0 0 4 4"><circle cx="2" cy="2" r="1.55" fill="#555" stroke="#9a9a9a" stroke-width="0.6"/></svg>
<div class="t" style="left:565.00px;top:122.84px;font-size:3.35px;color:#c4c4c4;-webkit-text-stroke-width:0.117px;">Root</div>
<div class="t" style="left:744.30px;top:122.84px;font-size:3.42px;color:#8e8e8e;-webkit-text-stroke-width:0.120px;">Actor</div>
<svg class="a" style="left:563.30px;top:126.50px" width="4" height="4" viewBox="0 0 4 4"><circle cx="2" cy="2" r="1.55" fill="#555" stroke="#9a9a9a" stroke-width="0.6"/></svg>
<div class="t" style="left:568.00px;top:127.84px;font-size:3.35px;color:#c4c4c4;-webkit-text-stroke-width:0.117px;">Blob_3_Eyes_2</div>
<div class="t" style="left:744.30px;top:127.84px;font-size:3.42px;color:#8e8e8e;-webkit-text-stroke-width:0.120px;">StaticMeshActor</div>
<svg class="a" style="left:563.30px;top:131.50px" width="4" height="4" viewBox="0 0 4 4"><circle cx="2" cy="2" r="1.55" fill="#555" stroke="#9a9a9a" stroke-width="0.6"/></svg>
<div class="t" style="left:568.00px;top:132.84px;font-size:3.35px;color:#c4c4c4;-webkit-text-stroke-width:0.117px;">Cube_L</div>
<div class="t" style="left:744.30px;top:132.84px;font-size:3.42px;color:#8e8e8e;-webkit-text-stroke-width:0.120px;">StaticMeshActor</div>
<svg class="a" style="left:563.30px;top:136.30px" width="4" height="4" viewBox="0 0 4 4"><circle cx="2" cy="2" r="1.55" fill="#555" stroke="#9a9a9a" stroke-width="0.6"/></svg>
<div class="t" style="left:568.00px;top:137.64px;font-size:3.35px;color:#c4c4c4;-webkit-text-stroke-width:0.117px;">Cube_R</div>
<div class="t" style="left:744.30px;top:137.64px;font-size:3.42px;color:#8e8e8e;-webkit-text-stroke-width:0.120px;">StaticMeshActor</div>
<svg class="a" style="left:563.30px;top:141.20px" width="4" height="4" viewBox="0 0 4 4"><circle cx="2" cy="2" r="1.55" fill="#555" stroke="#9a9a9a" stroke-width="0.6"/></svg>
<div class="t" style="left:568.00px;top:142.54px;font-size:3.35px;color:#c4c4c4;-webkit-text-stroke-width:0.117px;">HDRI</div>
<div class="t" style="left:744.30px;top:142.54px;font-size:3.42px;color:#8e8e8e;-webkit-text-stroke-width:0.120px;">StaticMeshActor</div>
<svg class="a" style="left:563.30px;top:146.00px" width="4" height="4" viewBox="0 0 4 4"><circle cx="2" cy="2" r="1.55" fill="#555" stroke="#9a9a9a" stroke-width="0.6"/></svg>
<div class="t" style="left:568.00px;top:147.34px;font-size:3.35px;color:#c4c4c4;-webkit-text-stroke-width:0.117px;">Hoop_2_Scarf</div>
<div class="t" style="left:744.30px;top:147.34px;font-size:3.42px;color:#8e8e8e;-webkit-text-stroke-width:0.120px;">StaticMeshActor</div>
<svg class="a" style="left:563.30px;top:151.00px" width="4" height="4" viewBox="0 0 4 4"><circle cx="2" cy="2" r="1.55" fill="#555" stroke="#9a9a9a" stroke-width="0.6"/></svg>
<div class="t" style="left:568.00px;top:152.34px;font-size:3.35px;color:#c4c4c4;-webkit-text-stroke-width:0.117px;">Prop_3</div>
<div class="t" style="left:744.30px;top:152.34px;font-size:3.42px;color:#8e8e8e;-webkit-text-stroke-width:0.120px;">StaticMeshActor</div>
<svg class="a" style="left:563.30px;top:156.00px" width="4" height="4" viewBox="0 0 4 4"><circle cx="2" cy="2" r="1.55" fill="#555" stroke="#9a9a9a" stroke-width="0.6"/></svg>
<div class="t" style="left:568.00px;top:157.34px;font-size:3.35px;color:#c4c4c4;-webkit-text-stroke-width:0.117px;">Spur_1_L</div>
<div class="t" style="left:744.30px;top:157.34px;font-size:3.42px;color:#8e8e8e;-webkit-text-stroke-width:0.120px;">StaticMeshActor</div>
<svg class="a" style="left:563.30px;top:161.00px" width="4" height="4" viewBox="0 0 4 4"><circle cx="2" cy="2" r="1.55" fill="#555" stroke="#9a9a9a" stroke-width="0.6"/></svg>
<div class="t" style="left:568.00px;top:162.34px;font-size:3.35px;color:#c4c4c4;-webkit-text-stroke-width:0.117px;">Spur_2_Fluff</div>
<div class="t" style="left:744.30px;top:162.34px;font-size:3.42px;color:#8e8e8e;-webkit-text-stroke-width:0.120px;">StaticMeshActor</div>
<svg class="a" style="left:563.30px;top:166.30px" width="4" height="4" viewBox="0 0 4 4"><circle cx="2" cy="2" r="1.55" fill="#555" stroke="#9a9a9a" stroke-width="0.6"/></svg>
<div class="t" style="left:568.00px;top:167.64px;font-size:3.35px;color:#c4c4c4;-webkit-text-stroke-width:0.117px;">Viewport</div>
<div class="t" style="left:744.30px;top:167.64px;font-size:3.42px;color:#8e8e8e;-webkit-text-stroke-width:0.120px;">StaticMeshActor</div>
<svg class="a" style="left:645.50px;top:71.80px" width="4" height="4.4" viewBox="0 0 4 4.4"><path d="M2.8 0 L0.4 2.5 L1.8 2.5 L1 4.4 L3.6 1.8 L2.2 1.8 Z" fill="#e8a020"/></svg>
<div class="t" style="left:649.40px;top:73.33px;font-size:3.11px;color:#8a8a8a;-webkit-text-stroke-width:0.109px;">InMergoTestSeq_2</div>
<div class="a" style="left:545px;top:233px;width:236px;height:8.5px;background:#262626;"></div>
<div class="t" style="left:548.50px;top:237.13px;font-size:3.53px;color:#a0a0a0;-webkit-text-stroke-width:0.124px;">21 actors</div>
<div class="a" style="left:545px;top:241.5px;width:236px;height:1.5px;background:#1b1b1b;"></div>
<div class="a" style="left:545px;top:243px;width:236px;height:6.5px;background:#161616;"></div>
<div class="a" style="left:545px;top:243px;width:40px;height:6.5px;background:#242424;"></div>
<svg class="a" style="left:545.5px;top:244px" width="4" height="4" viewBox="0 0 4 4"><path d="M0.3 3.7 L0.6 2.6 L2.8 0.4 L3.6 1.2 L1.4 3.4 Z" fill="#ccc"/></svg>
<div class="t" style="left:551.50px;top:245.73px;font-size:3.6px;color:#c8c8c8;-webkit-text-stroke-width:0.126px;">Details</div>
<div class="t" style="left:580.00px;top:245.74px;font-size:3.3px;color:#ccc;-webkit-text-stroke-width:0.116px;">×</div>
<div class="a" style="left:545px;top:249.5px;width:236px;height:169.5px;background:#242424;"></div>
<div class="t" style="left:646.00px;top:258.14px;font-size:2.95px;color:#7a7a7a;-webkit-text-stroke-width:0.103px;transform:scaleX(0.861);transform-origin:0 0;">Select an object to view details.</div>
<div class="a" style="left:19px;top:266.5px;width:525px;height:8px;background:#151515;"></div>
<div class="a" style="left:21px;top:267px;width:35.5px;height:7.5px;background:#1e1e1e;"></div>
<div class="a" style="left:21px;top:269.5px;width:3px;height:3.5px;background:#aaa;"></div>
<div class="t" style="left:25.90px;top:271.04px;font-size:3.5px;color:#b8b8b8;-webkit-text-stroke-width:0.123px;">Content Browser</div>
<div class="t" style="left:54.30px;top:271.04px;font-size:3.3px;color:#ccc;-webkit-text-stroke-width:0.116px;">×</div>
<div class="a" style="left:61.5px;top:269.5px;width:3.5px;height:3.5px;background:#999;"></div>
<div class="t" style="left:66.50px;top:271.04px;font-size:3.35px;color:#b8b8b8;-webkit-text-stroke-width:0.117px;">Sequencer</div>
<div class="a" style="left:20px;top:274.5px;width:524px;height:11.5px;background:#262626;"></div>
<div class="a" style="left:22.75px;top:276.5px;width:16.8px;height:5.5px;background:#303030;border-radius:1px"></div>
<div class="t" style="left:27.50px;top:278.56px;font-size:3.3px;color:#aa8a3a;-webkit-text-stroke-width:0.066px;font-weight:bold;">+</div>
<div class="t" style="left:31.00px;top:278.54px;font-size:3.37px;color:#6a6a6a;-webkit-text-stroke-width:0.118px;">Add</div>
<svg class="a" style="left:44px;top:277.2px" width="4" height="4" viewBox="0 0 4 4"><path d="M2 0.3 L3.8 3.6 L0.2 3.6 Z" fill="none" stroke="#555" stroke-width="0.6"/></svg>
<div class="t" style="left:48.50px;top:278.54px;font-size:3.3px;color:#5a5a5a;-webkit-text-stroke-width:0.116px;">Import</div>
<div class="a" style="left:63.5px;top:277px;width:3px;height:4.5px;background:#bbb;"></div>
<div class="t" style="left:67.75px;top:278.54px;font-size:3.46px;color:#c0c0c0;-webkit-text-stroke-width:0.121px;">Save All</div>
<div class="a" style="left:84.3px;top:277px;width:4.5px;height:4.5px;border-radius:50%;border:0.9px solid #777"></div>
<div class="a" style="left:90.5px;top:277.5px;width:3.5px;height:3.5px;border-radius:50%;border:0.8px solid #555"></div>
<div class="a" style="left:96px;top:277.5px;width:4px;height:3.5px;background:#ddd;"></div>
<div class="t" style="left:102.00px;top:278.54px;font-size:3.3px;color:#c0c0c0;-webkit-text-stroke-width:0.116px;">All</div>
<div class="t" style="left:109.50px;top:277.56px;font-size:4px;color:#ccc;-webkit-text-stroke-width:0.080px;font-weight:bold;">›</div>
<div class="a" style="left:522.5px;top:277.8px;width:3.6px;height:3.6px;border-radius:50%;border:1.1px solid #ccc"></div>
<div class="t" style="left:528.70px;top:278.94px;font-size:3.4px;color:#b8b8b8;-webkit-text-stroke-width:0.119px;">Settings</div>
<div class="a" style="left:20px;top:286px;width:86px;height:127px;background:#1a1a1a;"></div>
<div class="a" style="left:20px;top:286px;width:86px;height:6.5px;background:#262626;"></div>
<div class="a" style="left:22.50px;top:288.72px;width:0;height:0;border-left:0.97px solid transparent;border-right:0.97px solid transparent;border-top:1.17px solid #aaa"></div>
<div class="t" style="left:26.50px;top:288.66px;font-size:3.5px;color:#c0c0c0;-webkit-text-stroke-width:0.070px;font-weight:bold;">Paths</div>
<svg class="a" style="left:99.50px;top:287.00px" width="4.5" height="4.5" viewBox="0 0 4.5 4.5"><circle cx="1.8" cy="1.8" r="1.3" fill="none" stroke="#aaa" stroke-width="0.7"/><path d="M2.8 2.8 L4.2 4.2" stroke="#aaa" stroke-width="0.8"/></svg>
<div class="a" style="left:21px;top:293px;width:84.5px;height:4.5px;background:#3a4d6a;"></div>
<div class="a" style="left:22.60px;top:294.66px;width:0;height:0;border-left:0.90px solid transparent;border-right:0.90px solid transparent;border-top:1.08px solid #999"></div>
<div class="a" style="left:24.900000000000002px;top:293.9px;width:3.8px;height:2.6px;background:#b89040;border-radius:0.3px"></div>
<div class="a" style="left:24.900000000000002px;top:293.5px;width:1.6px;height:0.6px;background:#b89040;"></div>
<div class="t" style="left:29.60px;top:294.53px;font-size:3.1px;color:#d8d8d8;-webkit-text-stroke-width:0.109px;">All</div>
<div class="a" style="left:25.40px;top:298.66px;width:0;height:0;border-left:0.90px solid transparent;border-right:0.90px solid transparent;border-top:1.08px solid #999"></div>
<div class="a" style="left:27.7px;top:297.9px;width:3.8px;height:2.6px;background:#b89040;border-radius:0.3px"></div>
<div class="a" style="left:27.7px;top:297.5px;width:1.6px;height:0.6px;background:#b89040;"></div>
<div class="t" style="left:32.40px;top:298.53px;font-size:3.1px;color:#c0c0c0;-webkit-text-stroke-width:0.109px;">Content</div>
<div class="a" style="left:28.00px;top:302.30px;width:0;height:0;border-top:0.90px solid transparent;border-bottom:0.90px solid transparent;border-left:1.08px solid #999"></div>
<div class="a" style="left:30.3px;top:301.9px;width:3.8px;height:2.6px;background:#b89040;border-radius:0.3px"></div>
<div class="a" style="left:30.3px;top:301.5px;width:1.6px;height:0.6px;background:#b89040;"></div>
<div class="t" style="left:35.00px;top:302.53px;font-size:3.1px;color:#c0c0c0;-webkit-text-stroke-width:0.109px;">_AssetSource</div>
<div class="a" style="left:28.00px;top:306.66px;width:0;height:0;border-left:0.90px solid transparent;border-right:0.90px solid transparent;border-top:1.08px solid #999"></div>
<div class="a" style="left:30.3px;top:305.9px;width:3.8px;height:2.6px;background:#b89040;border-radius:0.3px"></div>
<div class="a" style="left:30.3px;top:305.5px;width:1.6px;height:0.6px;background:#b89040;"></div>
<div class="t" style="left:35.00px;top:306.53px;font-size:3.1px;color:#c0c0c0;-webkit-text-stroke-width:0.109px;">Fluff</div>
<div class="a" style="left:32.3px;top:309.9px;width:3.8px;height:2.6px;background:#b89040;border-radius:0.3px"></div>
<div class="a" style="left:32.3px;top:309.5px;width:1.6px;height:0.6px;background:#b89040;"></div>
<div class="t" style="left:37.00px;top:310.53px;font-size:3.1px;color:#c0c0c0;-webkit-text-stroke-width:0.109px;">Wall</div>
<div class="a" style="left:28.00px;top:314.30px;width:0;height:0;border-top:0.90px solid transparent;border-bottom:0.90px solid transparent;border-left:1.08px solid #999"></div>
<div class="a" style="left:30.3px;top:313.9px;width:3.8px;height:2.6px;background:#b89040;border-radius:0.3px"></div>
<div class="a" style="left:30.3px;top:313.5px;width:1.6px;height:0.6px;background:#b89040;"></div>
<div class="t" style="left:35.00px;top:314.53px;font-size:3.1px;color:#c0c0c0;-webkit-text-stroke-width:0.109px;">HR</div>
<div class="a" style="left:28.00px;top:318.30px;width:0;height:0;border-top:0.90px solid transparent;border-bottom:0.90px solid transparent;border-left:1.08px solid #999"></div>
<div class="a" style="left:30.3px;top:317.9px;width:3.8px;height:2.6px;background:#b89040;border-radius:0.3px"></div>
<div class="a" style="left:30.3px;top:317.5px;width:1.6px;height:0.6px;background:#b89040;"></div>
<div class="t" style="left:35.00px;top:318.53px;font-size:3.1px;color:#c0c0c0;-webkit-text-stroke-width:0.109px;">InMergo</div>
<div class="a" style="left:28.00px;top:322.30px;width:0;height:0;border-top:0.90px solid transparent;border-bottom:0.90px solid transparent;border-left:1.08px solid #999"></div>
<div class="a" style="left:30.3px;top:321.9px;width:3.8px;height:2.6px;background:#b89040;border-radius:0.3px"></div>
<div class="a" style="left:30.3px;top:321.5px;width:1.6px;height:0.6px;background:#b89040;"></div>
<div class="t" style="left:35.00px;top:322.53px;font-size:3.1px;color:#c0c0c0;-webkit-text-stroke-width:0.109px;">KeyArt</div>
<div class="a" style="left:28.00px;top:326.30px;width:0;height:0;border-top:0.90px solid transparent;border-bottom:0.90px solid transparent;border-left:1.08px solid #999"></div>
<div class="a" style="left:30.3px;top:325.9px;width:3.8px;height:2.6px;background:#b89040;border-radius:0.3px"></div>
<div class="a" style="left:30.3px;top:325.5px;width:1.6px;height:0.6px;background:#b89040;"></div>
<div class="t" style="left:35.00px;top:326.53px;font-size:3.1px;color:#c0c0c0;-webkit-text-stroke-width:0.109px;">PalmCreator</div>
<div class="a" style="left:28.00px;top:330.30px;width:0;height:0;border-top:0.90px solid transparent;border-bottom:0.90px solid transparent;border-left:1.08px solid #999"></div>
<div class="a" style="left:30.3px;top:329.9px;width:3.8px;height:2.6px;background:#b89040;border-radius:0.3px"></div>
<div class="a" style="left:30.3px;top:329.5px;width:1.6px;height:0.6px;background:#b89040;"></div>
<div class="t" style="left:35.00px;top:330.53px;font-size:3.1px;color:#c0c0c0;-webkit-text-stroke-width:0.109px;">Scenes</div>
<div class="a" style="left:32.3px;top:333.9px;width:3.8px;height:2.6px;background:#b89040;border-radius:0.3px"></div>
<div class="a" style="left:32.3px;top:333.5px;width:1.6px;height:0.6px;background:#b89040;"></div>
<div class="t" style="left:37.00px;top:334.53px;font-size:3.1px;color:#c0c0c0;-webkit-text-stroke-width:0.109px;">Splash</div>
<div class="a" style="left:25.40px;top:338.30px;width:0;height:0;border-top:0.90px solid transparent;border-bottom:0.90px solid transparent;border-left:1.08px solid #999"></div>
<div class="a" style="left:27.7px;top:337.9px;width:3.8px;height:2.6px;background:#b89040;border-radius:0.3px"></div>
<div class="a" style="left:27.7px;top:337.5px;width:1.6px;height:0.6px;background:#b89040;"></div>
<div class="t" style="left:32.40px;top:338.53px;font-size:3.1px;color:#c0c0c0;-webkit-text-stroke-width:0.109px;">Temp Content</div>
<div class="a" style="left:20px;top:413.8px;width:86px;height:5px;background:#262626;"></div>
<div class="a" style="left:22.50px;top:415.60px;width:0;height:0;border-top:0.90px solid transparent;border-bottom:0.90px solid transparent;border-left:1.08px solid #aaa"></div>
<div class="t" style="left:26.20px;top:415.86px;font-size:3.48px;color:#c0c0c0;-webkit-text-stroke-width:0.070px;font-weight:bold;">Collections</div>
<div class="a" style="left:92px;top:414.6px;width:3.5px;height:3.5px;border-radius:50%;border:0.8px solid #888"></div>
<svg class="a" style="left:99.00px;top:414.30px" width="4.5" height="4.5" viewBox="0 0 4.5 4.5"><circle cx="1.8" cy="1.8" r="1.3" fill="none" stroke="#aaa" stroke-width="0.7"/><path d="M2.8 2.8 L4.2 4.2" stroke="#aaa" stroke-width="0.8"/></svg>
<div class="a" style="left:106px;top:286px;width:1px;height:133px;background:#111;"></div>
<div class="a" style="left:107px;top:286px;width:54px;height:133px;background:#222;"></div>
<div class="a" style="left:107px;top:286px;width:54px;height:6.5px;background:#262626;"></div>
<div class="t" style="left:109.00px;top:288.66px;font-size:3.3px;color:#c0c0c0;-webkit-text-stroke-width:0.066px;font-weight:bold;">Filters</div>
<div class="a" style="left:109px;top:293.2px;width:49.5px;height:6.5px;background:#333;"></div>
<div class="a" style="left:109.5px;top:294px;width:1.6px;height:5px;background:#e08820;"></div>
<div class="t" style="left:113.00px;top:295.84px;font-size:3.35px;color:#c0c0c0;-webkit-text-stroke-width:0.117px;">Level</div>
<div class="a" style="left:161px;top:286px;width:2px;height:133px;background:#181818;"></div>
<div class="a" style="left:163px;top:286px;width:381px;height:127px;background:#252525;"></div>
<svg class="a" style="left:162.5px;top:286.8px" width="5" height="5" viewBox="0 0 5 5"><path d="M0 0 L4.5 0 L2.8 2.2 L2.8 4.5 L1.7 4 L1.7 2.2 Z" fill="#aaa"/><rect x="0" y="0" width="2" height="1.4" fill="#e07030"/><rect x="2.2" y="0" width="2" height="1.4" fill="#e0b030"/></svg>
<div class="a" style="left:167.50px;top:288.37px;width:0;height:0;border-left:1.05px solid transparent;border-right:1.05px solid transparent;border-top:1.26px solid #aaa"></div>
<svg class="a" style="left:173.80px;top:286.60px" width="4.5" height="4.5" viewBox="0 0 4.5 4.5"><circle cx="1.8" cy="1.8" r="1.3" fill="none" stroke="#bbb" stroke-width="0.7"/><path d="M2.8 2.8 L4.2 4.2" stroke="#bbb" stroke-width="0.8"/></svg>
<div class="a" style="left:178px;top:286.4px;width:118px;height:4.6px;background:#0f0f0f;border-radius:2px"></div>
<div class="t" style="left:180.00px;top:288.04px;font-size:3.33px;color:#555;-webkit-text-stroke-width:0.117px;">Search All</div>
<div class="a" style="left:291.50px;top:288.07px;width:0;height:0;border-left:1.05px solid transparent;border-right:1.05px solid transparent;border-top:1.26px solid #aaa"></div>
<div class="a" style="left:164.0px;top:293.2px;width:41px;height:38.4px;background:#1a1a1a;border-radius:1px 1px 0 0"></div>
<div class="a" style="left:164.0px;top:331.59999999999997px;width:41px;height:1.9px;background:#b8802a;"></div>
<div class="a" style="left:164.0px;top:333.5px;width:41px;height:23.4px;background:#3a3a3a;"></div>
<svg class="a" style="left:177.40px;top:306.00px" width="14" height="14" viewBox="0 0 14 14"><defs><linearGradient id="ig" x1="0" y1="0" x2="0" y2="1"><stop offset="0" stop-color="#8e8e8e"/><stop offset="1" stop-color="#626262"/></linearGradient><linearGradient id="mg" x1="0" y1="0" x2="0" y2="1"><stop offset="0" stop-color="#f0f0f0"/><stop offset="1" stop-color="#a8a8a8"/></linearGradient></defs><rect x="0" y="0" width="13.6" height="13.9" fill="#0c0c0c" rx="1"/><rect x="1.4" y="1" width="11.2" height="11.8" fill="url(#ig)"/><path d="M3.1 10.2 L5.6 4.2 L7.4 7.5 L9.1 6.3 L11.1 10.2 Z" fill="url(#mg)"/><rect x="1.4" y="10.5" width="11.2" height="2.3" fill="#d0d0d0"/></svg>
<div class="t" style="left:165.50px;top:335.34px;font-size:2.95px;color:#b0b0b0;-webkit-text-stroke-width:0.103px;transform:scaleX(0.932);transform-origin:0 0;">L_Main</div>
<div class="t" style="left:165.50px;top:353.84px;font-size:2.95px;color:#6a6a6a;-webkit-text-stroke-width:0.103px;transform:scaleX(0.847);transform-origin:0 0;">Level</div>
<div class="a" style="left:211.05px;top:293.2px;width:41px;height:38.4px;background:#1a1a1a;border-radius:1px 1px 0 0"></div>
<div class="a" style="left:211.05px;top:331.59999999999997px;width:41px;height:1.9px;background:#b8802a;"></div>
<div class="a" style="left:211.05px;top:333.5px;width:41px;height:23.4px;background:#3a3a3a;"></div>
<svg class="a" style="left:224.45px;top:306.00px" width="14" height="14" viewBox="0 0 14 14"><defs><linearGradient id="ig" x1="0" y1="0" x2="0" y2="1"><stop offset="0" stop-color="#8e8e8e"/><stop offset="1" stop-color="#626262"/></linearGradient><linearGradient id="mg" x1="0" y1="0" x2="0" y2="1"><stop offset="0" stop-color="#f0f0f0"/><stop offset="1" stop-color="#a8a8a8"/></linearGradient></defs><rect x="0" y="0" width="13.6" height="13.9" fill="#0c0c0c" rx="1"/><rect x="1.4" y="1" width="11.2" height="11.8" fill="url(#ig)"/><path d="M3.1 10.2 L5.6 4.2 L7.4 7.5 L9.1 6.3 L11.1 10.2 Z" fill="url(#mg)"/><rect x="1.4" y="10.5" width="11.2" height="2.3" fill="#d0d0d0"/></svg>
<div class="t" style="left:212.55px;top:335.34px;font-size:2.95px;color:#b0b0b0;-webkit-text-stroke-width:0.103px;transform:scaleX(0.932);transform-origin:0 0;">L_MainEnglD</div>
<div class="t" style="left:212.55px;top:353.84px;font-size:2.95px;color:#6a6a6a;-webkit-text-stroke-width:0.103px;transform:scaleX(0.847);transform-origin:0 0;">Level</div>
<div class="a" style="left:258.1px;top:293.2px;width:41px;height:38.4px;background:#1a1a1a;border-radius:1px 1px 0 0"></div>
<div class="a" style="left:258.1px;top:331.59999999999997px;width:41px;height:1.9px;background:#b8802a;"></div>
<div class="a" style="left:258.1px;top:333.5px;width:41px;height:23.4px;background:#3a3a3a;"></div>
<svg class="a" style="left:271.50px;top:306.00px" width="14" height="14" viewBox="0 0 14 14"><defs><linearGradient id="ig" x1="0" y1="0" x2="0" y2="1"><stop offset="0" stop-color="#8e8e8e"/><stop offset="1" stop-color="#626262"/></linearGradient><linearGradient id="mg" x1="0" y1="0" x2="0" y2="1"><stop offset="0" stop-color="#f0f0f0"/><stop offset="1" stop-color="#a8a8a8"/></linearGradient></defs><rect x="0" y="0" width="13.6" height="13.9" fill="#0c0c0c" rx="1"/><rect x="1.4" y="1" width="11.2" height="11.8" fill="url(#ig)"/><path d="M3.1 10.2 L5.6 4.2 L7.4 7.5 L9.1 6.3 L11.1 10.2 Z" fill="url(#mg)"/><rect x="1.4" y="10.5" width="11.2" height="2.3" fill="#d0d0d0"/></svg>
<div class="t" style="left:259.60px;top:335.34px;font-size:2.95px;color:#b0b0b0;-webkit-text-stroke-width:0.103px;transform:scaleX(0.932);transform-origin:0 0;">L_MainEF</div>
<div class="t" style="left:259.60px;top:353.84px;font-size:2.95px;color:#6a6a6a;-webkit-text-stroke-width:0.103px;transform:scaleX(0.847);transform-origin:0 0;">Level</div>
<div class="a" style="left:305.15px;top:293.2px;width:41px;height:38.4px;background:#1a1a1a;border-radius:1px 1px 0 0"></div>
<div class="a" style="left:305.15px;top:331.59999999999997px;width:41px;height:1.9px;background:#b8802a;"></div>
<div class="a" style="left:305.15px;top:333.5px;width:41px;height:23.4px;background:#3a3a3a;"></div>
<svg class="a" style="left:318.55px;top:306.00px" width="14" height="14" viewBox="0 0 14 14"><defs><linearGradient id="ig" x1="0" y1="0" x2="0" y2="1"><stop offset="0" stop-color="#8e8e8e"/><stop offset="1" stop-color="#626262"/></linearGradient><linearGradient id="mg" x1="0" y1="0" x2="0" y2="1"><stop offset="0" stop-color="#f0f0f0"/><stop offset="1" stop-color="#a8a8a8"/></linearGradient></defs><rect x="0" y="0" width="13.6" height="13.9" fill="#0c0c0c" rx="1"/><rect x="1.4" y="1" width="11.2" height="11.8" fill="url(#ig)"/><path d="M3.1 10.2 L5.6 4.2 L7.4 7.5 L9.1 6.3 L11.1 10.2 Z" fill="url(#mg)"/><rect x="1.4" y="10.5" width="11.2" height="2.3" fill="#d0d0d0"/></svg>
<div class="t" style="left:306.65px;top:335.34px;font-size:2.95px;color:#b0b0b0;-webkit-text-stroke-width:0.103px;transform:scaleX(0.932);transform-origin:0 0;">L_MainKeyArt</div>
<div class="t" style="left:306.65px;top:353.84px;font-size:2.95px;color:#6a6a6a;-webkit-text-stroke-width:0.103px;transform:scaleX(0.847);transform-origin:0 0;">Level</div>
<div class="a" style="left:352.2px;top:293.2px;width:41px;height:38.4px;background:#1a1a1a;border-radius:1px 1px 0 0"></div>
<div class="a" style="left:352.2px;top:331.59999999999997px;width:41px;height:1.9px;background:#b8802a;"></div>
<div class="a" style="left:352.2px;top:333.5px;width:41px;height:23.4px;background:#3a3a3a;"></div>
<svg class="a" style="left:365.60px;top:306.00px" width="14" height="14" viewBox="0 0 14 14"><defs><linearGradient id="ig" x1="0" y1="0" x2="0" y2="1"><stop offset="0" stop-color="#8e8e8e"/><stop offset="1" stop-color="#626262"/></linearGradient><linearGradient id="mg" x1="0" y1="0" x2="0" y2="1"><stop offset="0" stop-color="#f0f0f0"/><stop offset="1" stop-color="#a8a8a8"/></linearGradient></defs><rect x="0" y="0" width="13.6" height="13.9" fill="#0c0c0c" rx="1"/><rect x="1.4" y="1" width="11.2" height="11.8" fill="url(#ig)"/><path d="M3.1 10.2 L5.6 4.2 L7.4 7.5 L9.1 6.3 L11.1 10.2 Z" fill="url(#mg)"/><rect x="1.4" y="10.5" width="11.2" height="2.3" fill="#d0d0d0"/></svg>
<div class="t" style="left:353.70px;top:335.34px;font-size:2.95px;color:#b0b0b0;-webkit-text-stroke-width:0.103px;transform:scaleX(0.932);transform-origin:0 0;">L_MainKeyArt1</div>
<div class="t" style="left:353.70px;top:353.84px;font-size:2.95px;color:#6a6a6a;-webkit-text-stroke-width:0.103px;transform:scaleX(0.847);transform-origin:0 0;">Level</div>
<div class="a" style="left:399.25px;top:293.2px;width:41px;height:38.4px;background:#1a1a1a;border-radius:1px 1px 0 0"></div>
<div class="a" style="left:399.25px;top:331.59999999999997px;width:41px;height:1.9px;background:#b8802a;"></div>
<div class="a" style="left:399.25px;top:333.5px;width:41px;height:23.4px;background:#3a3a3a;"></div>
<svg class="a" style="left:412.65px;top:306.00px" width="14" height="14" viewBox="0 0 14 14"><defs><linearGradient id="ig" x1="0" y1="0" x2="0" y2="1"><stop offset="0" stop-color="#8e8e8e"/><stop offset="1" stop-color="#626262"/></linearGradient><linearGradient id="mg" x1="0" y1="0" x2="0" y2="1"><stop offset="0" stop-color="#f0f0f0"/><stop offset="1" stop-color="#a8a8a8"/></linearGradient></defs><rect x="0" y="0" width="13.6" height="13.9" fill="#0c0c0c" rx="1"/><rect x="1.4" y="1" width="11.2" height="11.8" fill="url(#ig)"/><path d="M3.1 10.2 L5.6 4.2 L7.4 7.5 L9.1 6.3 L11.1 10.2 Z" fill="url(#mg)"/><rect x="1.4" y="10.5" width="11.2" height="2.3" fill="#d0d0d0"/></svg>
<div class="t" style="left:400.75px;top:335.34px;font-size:2.95px;color:#b0b0b0;-webkit-text-stroke-width:0.103px;transform:scaleX(0.932);transform-origin:0 0;">L_MainKeyArt2</div>
<div class="t" style="left:400.75px;top:353.84px;font-size:2.95px;color:#6a6a6a;-webkit-text-stroke-width:0.103px;transform:scaleX(0.847);transform-origin:0 0;">Level</div>
<div class="a" style="left:446.29999999999995px;top:293.2px;width:41px;height:38.4px;background:#1a1a1a;border-radius:1px 1px 0 0"></div>
<div class="a" style="left:446.29999999999995px;top:331.59999999999997px;width:41px;height:1.9px;background:#b8802a;"></div>
<div class="a" style="left:446.29999999999995px;top:333.5px;width:41px;height:23.4px;background:#3a3a3a;"></div>
<svg class="a" style="left:459.70px;top:306.00px" width="14" height="14" viewBox="0 0 14 14"><defs><linearGradient id="ig" x1="0" y1="0" x2="0" y2="1"><stop offset="0" stop-color="#8e8e8e"/><stop offset="1" stop-color="#626262"/></linearGradient><linearGradient id="mg" x1="0" y1="0" x2="0" y2="1"><stop offset="0" stop-color="#f0f0f0"/><stop offset="1" stop-color="#a8a8a8"/></linearGradient></defs><rect x="0" y="0" width="13.6" height="13.9" fill="#0c0c0c" rx="1"/><rect x="1.4" y="1" width="11.2" height="11.8" fill="url(#ig)"/><path d="M3.1 10.2 L5.6 4.2 L7.4 7.5 L9.1 6.3 L11.1 10.2 Z" fill="url(#mg)"/><rect x="1.4" y="10.5" width="11.2" height="2.3" fill="#d0d0d0"/></svg>
<div class="t" style="left:447.80px;top:335.34px;font-size:2.95px;color:#b0b0b0;-webkit-text-stroke-width:0.103px;transform:scaleX(0.932);transform-origin:0 0;">L_Option4</div>
<div class="t" style="left:447.80px;top:353.84px;font-size:2.95px;color:#6a6a6a;-webkit-text-stroke-width:0.103px;transform:scaleX(0.847);transform-origin:0 0;">Level</div>
<div class="a" style="left:493.34999999999997px;top:293.2px;width:41px;height:38.4px;background:#1a1a1a;border-radius:1px 1px 0 0"></div>
<div class="a" style="left:493.34999999999997px;top:331.59999999999997px;width:41px;height:1.9px;background:#b8802a;"></div>
<div class="a" style="left:493.34999999999997px;top:333.5px;width:41px;height:23.4px;background:#3a3a3a;"></div>
<svg class="a" style="left:506.75px;top:306.00px" width="14" height="14" viewBox="0 0 14 14"><defs><linearGradient id="ig" x1="0" y1="0" x2="0" y2="1"><stop offset="0" stop-color="#8e8e8e"/><stop offset="1" stop-color="#626262"/></linearGradient><linearGradient id="mg" x1="0" y1="0" x2="0" y2="1"><stop offset="0" stop-color="#f0f0f0"/><stop offset="1" stop-color="#a8a8a8"/></linearGradient></defs><rect x="0" y="0" width="13.6" height="13.9" fill="#0c0c0c" rx="1"/><rect x="1.4" y="1" width="11.2" height="11.8" fill="url(#ig)"/><path d="M3.1 10.2 L5.6 4.2 L7.4 7.5 L9.1 6.3 L11.1 10.2 Z" fill="url(#mg)"/><rect x="1.4" y="10.5" width="11.2" height="2.3" fill="#d0d0d0"/></svg>
<div class="t" style="left:494.85px;top:335.34px;font-size:2.95px;color:#b0b0b0;-webkit-text-stroke-width:0.103px;transform:scaleX(0.932);transform-origin:0 0;">L_RenderingTest</div>
<div class="t" style="left:494.85px;top:353.84px;font-size:2.95px;color:#6a6a6a;-webkit-text-stroke-width:0.103px;transform:scaleX(0.847);transform-origin:0 0;">Level</div>
<div class="a" style="left:164.0px;top:359.5px;width:41px;height:38.4px;background:#1a1a1a;border-radius:1px 1px 0 0"></div>
<div class="a" style="left:164.0px;top:397.9px;width:41px;height:1.9px;background:#b8802a;"></div>
<div class="a" style="left:164.0px;top:399.8px;width:41px;height:13.2px;background:#3a3a3a;"></div>
<svg class="a" style="left:177.40px;top:372.30px" width="14" height="14" viewBox="0 0 14 14"><defs><linearGradient id="ig" x1="0" y1="0" x2="0" y2="1"><stop offset="0" stop-color="#8e8e8e"/><stop offset="1" stop-color="#626262"/></linearGradient><linearGradient id="mg" x1="0" y1="0" x2="0" y2="1"><stop offset="0" stop-color="#f0f0f0"/><stop offset="1" stop-color="#a8a8a8"/></linearGradient></defs><rect x="0" y="0" width="13.6" height="13.9" fill="#0c0c0c" rx="1"/><rect x="1.4" y="1" width="11.2" height="11.8" fill="url(#ig)"/><path d="M3.1 10.2 L5.6 4.2 L7.4 7.5 L9.1 6.3 L11.1 10.2 Z" fill="url(#mg)"/><rect x="1.4" y="10.5" width="11.2" height="2.3" fill="#d0d0d0"/></svg>
<div class="t" style="left:165.50px;top:401.64px;font-size:2.95px;color:#b0b0b0;-webkit-text-stroke-width:0.103px;transform:scaleX(0.932);transform-origin:0 0;">L_RenderPipeline</div>
<div class="a" style="left:211.05px;top:359.5px;width:41px;height:38.4px;background:#1a1a1a;border-radius:1px 1px 0 0"></div>
<div class="a" style="left:211.05px;top:397.9px;width:41px;height:1.9px;background:#b8802a;"></div>
<div class="a" style="left:211.05px;top:399.8px;width:41px;height:13.2px;background:#3a3a3a;"></div>
<svg class="a" style="left:224.45px;top:372.30px" width="14" height="14" viewBox="0 0 14 14"><defs><linearGradient id="ig" x1="0" y1="0" x2="0" y2="1"><stop offset="0" stop-color="#8e8e8e"/><stop offset="1" stop-color="#626262"/></linearGradient><linearGradient id="mg" x1="0" y1="0" x2="0" y2="1"><stop offset="0" stop-color="#f0f0f0"/><stop offset="1" stop-color="#a8a8a8"/></linearGradient></defs><rect x="0" y="0" width="13.6" height="13.9" fill="#0c0c0c" rx="1"/><rect x="1.4" y="1" width="11.2" height="11.8" fill="url(#ig)"/><path d="M3.1 10.2 L5.6 4.2 L7.4 7.5 L9.1 6.3 L11.1 10.2 Z" fill="url(#mg)"/><rect x="1.4" y="10.5" width="11.2" height="2.3" fill="#d0d0d0"/></svg>
<div class="t" style="left:212.55px;top:401.64px;font-size:2.95px;color:#b0b0b0;-webkit-text-stroke-width:0.103px;transform:scaleX(0.932);transform-origin:0 0;">VertexTest</div>
<div class="a" style="left:164px;top:331px;width:2px;height:2px;background:#ddd;border-radius:50%"></div>
<div class="a" style="left:539px;top:294px;width:2px;height:125px;background:#4a4a4a;border-radius:1px"></div>
<div class="a" style="left:163px;top:413px;width:381px;height:6px;background:#1e1e1e;"></div>
<div class="t" style="left:163.00px;top:416.93px;font-size:3.18px;color:#a0a0a0;-webkit-text-stroke-width:0.111px;">10 items</div>
<div class="a" style="left:544px;top:266.5px;width:1px;height:152.5px;background:#151515;"></div>
<div class="a" style="left:19px;top:418.5px;width:762px;height:0.5px;background:#080808;"></div>
</div></body></html>
